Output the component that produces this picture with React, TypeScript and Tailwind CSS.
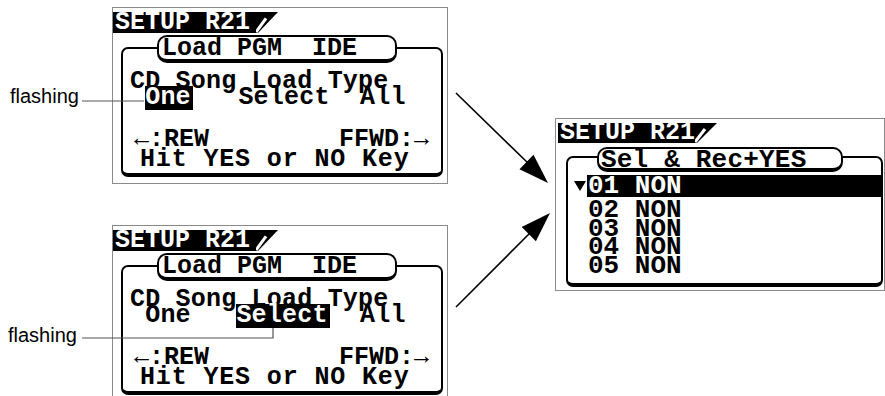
import React from 'react';

const lcd = "font-['Liberation_Mono','DejaVu_Sans_Mono',monospace] font-bold text-black";

const TabTail: React.FC<{ h: number }> = ({ h }) => (
  <svg width="22" height={h} viewBox={`0 0 22 ${h}`} className="block">
    <polygon points={`0,0 22,0 2,${h} 0,${h}`} fill="#000" />
    <line x1="0" y1={h - 1} x2="10" y2={h * 0.3} stroke="#fff" strokeWidth="3" />
  </svg>
);

const Tab: React.FC<{ h: number; w: number }> = ({ h, w }) => (
  <div className="flex">
    <div
      className={`${lcd} bg-black text-white text-[25px] pl-[2px] whitespace-pre`}
      style={{ height: h, width: w, lineHeight: `${h}px` }}
    >
      <span className="text-white">SETUP R21</span>
    </div>
    <TabTail h={h} />
  </div>
);

const LoadPanel: React.FC<{ hi: 'one' | 'select' }> = ({ hi }) => (
  <div className="w-[336px] h-[177px] border border-[#8a8a8a] bg-white">
    <div className="mt-[4px]">
      <Tab h={21} w={143} />
    </div>

    <div className="mt-[14px] ml-[8px] mr-[4px] border-2 border-b-4 border-black rounded-[7px] pl-[7px] pb-[3px]">
      {/* title capsule */}
      <div className={`${lcd} -mt-[14px] ml-[27px] w-[240px] h-[28px] bg-white border-2 border-b-4 border-black rounded-[10px] pl-[3px] text-[25px] leading-[24px] whitespace-pre`}>
        Load PGM  IDE
      </div>

      <div className={`${lcd} mt-[9px] h-[14px] text-[25px] leading-[20px] tracking-[0.2px] whitespace-pre`}>
        CD Song Load Type
      </div>
      <div className={`${lcd} h-[24px] text-[25px] leading-[24px] tracking-[0.2px] whitespace-pre`}>
        {' '}
        <span className={hi === 'one' ? 'inline-block bg-black text-white pr-[2px]' : ''}>One</span>
        {'   '}
        <span className={hi === 'select' ? 'inline-block bg-black text-white pr-[2px]' : ''}>Select</span>
        {'  '}All
      </div>
      <div className="h-[20px]" />
      <div className={`${lcd} h-[20px] text-[25px] leading-[20px] flex justify-between pr-[12px] whitespace-pre`}>
        <span className="pl-[4px]">←:REW</span>
        <span>FFWD:→</span>
      </div>
      <div className={`${lcd} h-[20px] text-[25px] leading-[20px] pl-[10px] tracking-[0.85px] whitespace-pre`}>
        Hit YES or NO Key
      </div>
    </div>
  </div>
);

const rows = ['02', '03', '04', '05'];

const SelPanel: React.FC = () => (
  <div className="w-[330px] h-[173px] border border-[#8a8a8a] bg-white">
    <div className="mt-[4px] ml-[2px]">
      <Tab h={20} w={137} />
    </div>

    <div className="mt-[13px] ml-[10px] mr-[1px] border-2 border-b-4 border-black rounded-[7px] pb-[8px]">
      <div className={`${lcd} -mt-[11px] ml-[29px] w-[246px] h-[25px] bg-white border-2 border-b-4 border-black rounded-[10px] pl-[2px] text-[26px] leading-[22px] tracking-[0.2px] whitespace-pre`}>
        Sel &amp; Rec+YES
      </div>

      <div className="mt-[3px] flex h-[22px]">
        <div className="w-[19px] flex items-center justify-end pr-[1px]">
          <svg width="12" height="10" viewBox="0 0 12 10">
            <polygon points="0,0 12,0 6,10" fill="#000" />
          </svg>
        </div>
        <div className={`${lcd} flex-1 bg-black text-white text-[26px] leading-[22px] pl-[1px] whitespace-pre`}>
          01 NON
        </div>
      </div>

      <div className="mt-[4px]">
        {rows.map((r) => (
          <div key={r} className={`${lcd} h-[18.5px] text-[26px] leading-[18.5px] pl-[20px] whitespace-pre`}>
            {r} NON
          </div>
        ))}
      </div>
    </div>
  </div>
);

const App: React.FC = () => {
  return (
    <div className="relative w-[885px] h-[396px] bg-white overflow-hidden">
      <div className="flex">
        {/* Left: two load screens */}
        <div className="flex flex-col gap-[41px] pl-[112px] pt-[7px]">
          <LoadPanel hi="one" />
          <LoadPanel hi="select" />
        </div>

        {/* Right: select screen */}
        <div className="ml-[107px] pt-[118px]">
          <SelPanel />
        </div>
      </div>

      {/* callout labels */}
      <div className="absolute left-[10px] top-[86px] font-['Liberation_Sans',Arial,sans-serif] text-[20px] leading-[20px] text-black">
        flashing
      </div>
      <div className="absolute left-[8px] top-[325px] font-['Liberation_Sans',Arial,sans-serif] text-[20px] leading-[20px] text-black">
        flashing
      </div>

      {/* leader lines and arrows */}
      <svg className="absolute inset-0 pointer-events-none" width="885" height="396" viewBox="0 0 885 396">
        <line x1="82" y1="101" x2="144" y2="101" stroke="#555" strokeWidth="1.2" />
        <polyline points="82,338 273,338 273,328" fill="none" stroke="#555" strokeWidth="1.2" />

        <line x1="456" y1="93" x2="530" y2="165" stroke="#000" strokeWidth="1.6" />
        <polygon points="548,183 519.5,169.2 533.5,154.8" fill="#000" />

        <line x1="456" y1="307" x2="532" y2="231" stroke="#000" strokeWidth="1.6" />
        <polygon points="550,213 535.9,241.3 521.7,227.1" fill="#000" />
      </svg>
    </div>
  );
};

export default App;
